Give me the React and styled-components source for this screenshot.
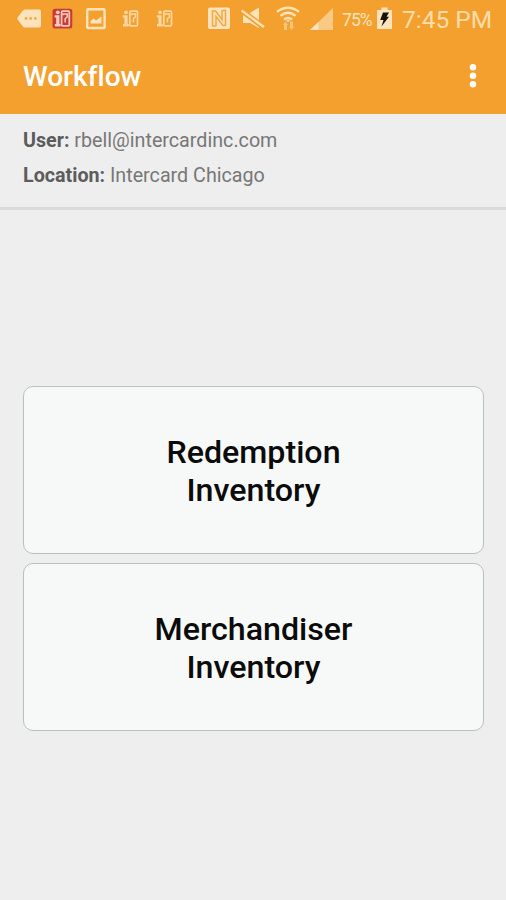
import styled, { createGlobalStyle } from "styled-components";

const GlobalStyle = createGlobalStyle`
  * {
    box-sizing: border-box;
  }

  body {
    margin: 0;
    background: #eeeeee;
    font-family: Roboto, sans-serif;
  }
`;
const Screen = styled.div`
  height: 900px;
  display: flex;
  flex-direction: column;
  background: #eeeeee;
  overflow: hidden;
`;
const Header = styled.header`
  height: 114px;
  flex: none;
  background: #f4a02f;
  color: #ffffff;
`;
const StatusBar = styled.div`
  height: 38px;
  padding: 0 14px 0 17px;
  display: flex;
  align-items: center;
  justify-content: space-between;
  color: #fde3bb;
`;
const StatusGroup = styled.div`
  height: 38px;
  display: flex;
  align-items: center;
`;
const StatusIcon = styled.svg`
  display: block;
  flex: none;
  width: ${(props) => props.$width}px;
  height: 38px;
  margin-right: ${(props) => props.$gap || 0}px;
`;
const Battery = styled.span`
  width: 30px;
  margin-right: 5px;
  padding-top: 2px;
  font-size: 17.5px;
  line-height: 20px;
  letter-spacing: -0.9px;
  white-space: nowrap;
`;
const Clock = styled.span`
  width: 90px;
  padding-top: 2px;
  color: #fddcab;
  font-size: 24.5px;
  font-weight: 400;
  line-height: 30px;
  white-space: nowrap;
`;
const Toolbar = styled.div`
  height: 76px;
  padding: 0 24px 0 23px;
  display: flex;
  align-items: center;
  justify-content: space-between;
`;
const Title = styled.h1`
  margin: 0;
  padding-top: 1px;
  font-size: 28px;
  font-weight: 500;
  line-height: 32px;
  font-variant-ligatures: none;
`;
const MenuButton = styled.button`
  width: 18px;
  height: 36px;
  padding: 0;
  border: none;
  background: none;
  color: inherit;
`;
const Account = styled.section`
  height: 96px;
  flex: none;
  padding: 9px 23px 0;
  border-bottom: 3px solid #dadada;
`;
const AccountLine = styled.p`
  margin: 0;
  font-size: 19.7px;
  line-height: 35px;
  color: #777777;
`;
const Label = styled.strong`
  font-weight: 700;
  color: #5c5c5c;
`;
const Actions = styled.main`
  flex: 1;
  padding: 7px 22px 0 23px;
  display: flex;
  flex-direction: column;
  justify-content: center;
  gap: 9px;
`;
const ActionButton = styled.button`
  height: 168px;
  padding: 2px 110px 0;
  border: 1px solid #b9c1be;
  border-radius: 10px;
  background: #f7f9f8;
  color: #0b0b0b;
  font-family: inherit;
  font-size: 32.2px;
  font-weight: 500;
  line-height: 38px;
`;

function MessageIcon() {
  return (
    <StatusIcon $width={24} $gap={11} viewBox="0 0 24 38">
      <path
        d="M8 9.5H22Q24 9.5 24 11.5V25.5Q24 27.5 22 27.5H8Q6.5 27.5 5.5 26L0.5 19.5Q0 18.5 0.5 17.5L5.5 11Q6.5 9.5 8 9.5Z"
        fill="currentColor"
      />
      <g fill="#f4a84a">
        <circle cx="9" cy="18.5" r="1.4" />
        <circle cx="13.7" cy="18.5" r="1.4" />
        <circle cx="18.4" cy="18.5" r="1.4" />
      </g>
    </StatusIcon>
  );
}

function CardGlyph({ color }) {
  return (
    <g>
      <g fill={color}>
        <circle cx="4" cy="12.3" r="1.9" />
        <path d="M0.8 15.2H5.6V24H6.8V26.5H1V24H2.4V17.5H0.8Z" />
      </g>
      <g fill="none" stroke={color} strokeWidth="1.7">
        <rect x="7.8" y="11.2" width="7.7" height="14.6" rx="1" />
        <path d="M9.2 15.2V14H13.4V17L11.4 18.5V22.5" strokeWidth="1.5" />
      </g>
    </g>
  );
}

function CardIcon({ gap }) {
  return (
    <StatusIcon $width={17} $gap={gap} viewBox="0 0 17 38">
      <CardGlyph color="#fcd7a2" />
    </StatusIcon>
  );
}

function CardAppIcon() {
  return (
    <StatusIcon $width={21} $gap={13} viewBox="0 0 21 38">
      <rect x="0.5" y="8.7" width="19.8" height="19.8" rx="2.5" fill="#cc3a36" />
      <g transform="translate(1.8 0)">
        <CardGlyph color="#fbcdbd" />
      </g>
    </StatusIcon>
  );
}

function PictureIcon() {
  return (
    <StatusIcon $width={20} $gap={16} viewBox="0 0 20 38">
      <rect
        x="1.2"
        y="9.2"
        width="17.4"
        height="18.8"
        rx="1"
        fill="none"
        stroke="currentColor"
        strokeWidth="2.4"
      />
      <path
        d="M4.5 23.5V21L7.5 18.5L10 20.5L15.5 16.5V23.5Z"
        fill="currentColor"
      />
    </StatusIcon>
  );
}

function NfcIcon() {
  return (
    <StatusIcon $width={22} $gap={11} viewBox="0 0 22 38">
      <rect y="7.5" width="22" height="21.5" rx="2" fill="currentColor" />
      <path
        d="M8.5 26H4.5V11H7.5L14 19.5V11M13.5 10.5H17.5V25.5H15L8 16.5V26"
        fill="none"
        stroke="#f4a843"
        strokeWidth="1.5"
      />
    </StatusIcon>
  );
}

function MuteIcon() {
  return (
    <StatusIcon $width={24} $gap={11} viewBox="0 0 24 38">
      <path d="M2 13.5H8L18 7.5V28L9 23H2Z" fill="currentColor" />
      <path d="M0 10L23 27.5" stroke="#f4a02f" strokeWidth="5.4" />
      <path d="M0.5 10.5L23 27" stroke="currentColor" strokeWidth="2.4" />
    </StatusIcon>
  );
}

function WifiIcon() {
  return (
    <StatusIcon $width={24} $gap={10} viewBox="0 0 24 38">
      <g fill="none" stroke="currentColor" strokeWidth="2.4">
        <path d="M1 11.8Q12 3.8 23 11.8" />
        <path d="M4.5 15.8Q12 9.8 19.5 15.8" />
        <path d="M8 19.5Q12 16.3 16 19.5" />
      </g>
      <path d="M10 20H14L12 22.3Z" fill="currentColor" />
      <g fill="#f9c680">
        <path d="M9.5 21.5L12 25H11V30H8V25H7Z" />
        <path d="M15.5 30L18 26.5H17V21.5H14V26.5H13Z" />
      </g>
    </StatusIcon>
  );
}

function SignalIcon() {
  return (
    <StatusIcon $width={23} $gap={9} viewBox="0 0 23 38">
      <path d="M0 30L23 8V30Z" fill="#f9c985" />
      <path d="M0 30L8.5 22V30Z" fill="currentColor" />
    </StatusIcon>
  );
}

function BatteryIcon() {
  return (
    <StatusIcon $width={15} $gap={10} viewBox="0 0 15 38">
      <path d="M4.5 7.5H10.5V10H15V29H0V10H4.5Z" fill="currentColor" />
      <path
        d="M6 12.5H12L9.5 16.8H12L4.5 26.5L6.5 20H3.2Z"
        fill="#17120b"
      />
    </StatusIcon>
  );
}

function MoreIcon() {
  return (
    <svg width="18" height="36" viewBox="0 0 18 36" fill="currentColor">
      <circle cx="9" cy="9.2" r="3.2" />
      <circle cx="9" cy="17.7" r="3.2" />
      <circle cx="9" cy="26.2" r="3.2" />
    </svg>
  );
}

export default function App() {
  return (
    <>
      <GlobalStyle />
      <Screen>
        <Header>
          <StatusBar>
            <StatusGroup>
              <MessageIcon />
              <CardAppIcon />
              <PictureIcon />
              <CardIcon gap={17} />
              <CardIcon gap={0} />
            </StatusGroup>
            <StatusGroup>
              <NfcIcon />
              <MuteIcon />
              <WifiIcon />
              <SignalIcon />
              <Battery>75%</Battery>
              <BatteryIcon />
              <Clock>7:45 PM</Clock>
            </StatusGroup>
          </StatusBar>
          <Toolbar>
            <Title>Workflow</Title>
            <MenuButton aria-label="More options">
              <MoreIcon />
            </MenuButton>
          </Toolbar>
        </Header>
        <Account>
          <AccountLine>
            <Label>User:</Label> rbell@intercardinc.com
          </AccountLine>
          <AccountLine>
            <Label>Location:</Label> Intercard Chicago
          </AccountLine>
        </Account>
        <Actions>
          <ActionButton>
            Redemption
            <br />
            Inventory
          </ActionButton>
          <ActionButton>
            Merchandiser
            <br />
            Inventory
          </ActionButton>
        </Actions>
      </Screen>
    </>
  );
}
